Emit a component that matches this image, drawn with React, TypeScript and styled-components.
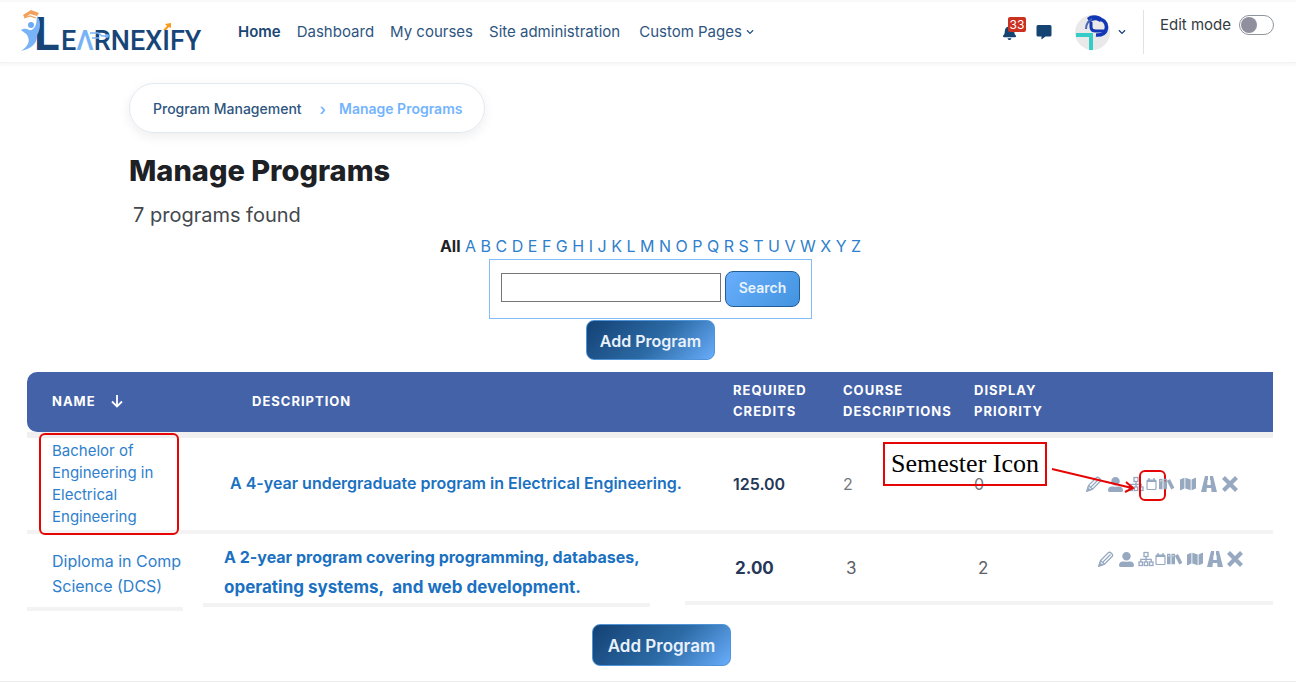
import React from "react";
import styled, { createGlobalStyle } from "styled-components";
import { FaBell, FaChevronDown, FaUserAlt, FaMap } from "react-icons/fa";
import { ImBooks } from "react-icons/im";

const GlobalStyle = createGlobalStyle`
  * { box-sizing: border-box; }
  body {
    margin: 0;
    background: #fff;
    color: #1d2125;
    font-family: Inter, "Liberation Sans", sans-serif;
    font-size: 16px;
  }
  a { text-decoration: none; color: inherit; }
  button { font-family: inherit; cursor: pointer; }
`;

const Header = styled.header`
  display: flex;
  align-items: center;
  height: 63px;
  padding: 0 22px 0 20px;
  border-top: 2px solid #f9f9f9;
  border-bottom: 1px solid #f3f3f3;
  box-shadow: 0 2px 3px rgba(0, 0, 0, 0.04);
`;

const Logo = styled.a`
  display: block;
  width: 184px;
  margin-right: 34px;
  svg { display: block; }
`;

const Nav = styled.nav`
  display: flex;
  align-items: center;
  gap: 16px;
  flex: 1;
`;

const NavLink = styled.a<{ $active?: boolean }>`
  display: flex;
  align-items: center;
  gap: 4px;
  font-size: 15px;
  line-height: 20px;
  white-space: nowrap;
  color: ${(p) => (p.$active ? "#1b4674" : "#2d5580")};
  font-weight: ${(p) => (p.$active ? 600 : 400)};
`;

const MenuLink = styled(NavLink)`
  margin-left: 3px;
`;

const Tools = styled.div`
  display: flex;
  align-items: center;
  align-self: stretch;
`;

const PlainButton = styled.button`
  position: relative;
  display: flex;
  align-items: center;
  padding: 0;
  border: 0;
  background: none;
  color: #17437a;
`;

const BellButton = styled(PlainButton)`
  margin-right: 19px;
  color: #164472;
`;

const Badge = styled.span`
  position: absolute;
  left: 6px;
  top: -8px;
  width: 18px;
  height: 15px;
  border-radius: 2px;
  background: #ca3120;
  color: #fff;
  font-size: 12px;
  line-height: 15px;
  text-align: center;
`;

const ProfileButton = styled(PlainButton)`
  gap: 8px;
  margin: 0 17px 0 23px;
`;

const EditMode = styled.label`
  display: flex;
  align-items: flex-start;
  gap: 8px;
  align-self: center;
  height: 44px;
  padding: 5px 0 0 16px;
  border-left: 1px solid #dee2e6;
  font-size: 15px;
  line-height: 20px;
  color: #343a40;
`;

const Switch = styled.input`
  appearance: none;
  width: 35px;
  height: 20px;
  margin: 0;
  padding: 1px;
  border: 1px solid #8f959e;
  border-radius: 10px;
  background: #fff;
  &::before {
    content: "";
    display: block;
    width: 16px;
    height: 16px;
    border-radius: 50%;
    background: #8f8f9d;
  }
`;

const Intro = styled.section`
  padding: 20px 129px 0;
`;

const Breadcrumb = styled.nav`
  display: inline-flex;
  align-items: center;
  height: 50px;
  padding: 2px 22px 0 23px;
  border: 1px solid #e1e8f0;
  border-radius: 25px;
  box-shadow: 0 4px 12px rgba(0, 0, 0, 0.07);
  font-size: 14px;
  line-height: 20px;
  font-weight: 500;
  color: #2d5580;
`;

const Separator = styled.span`
  margin: 0 13px 0 18px;
  color: #6cb0ff;
  font-size: 16px;
`;

const Current = styled.span`
  font-weight: 600;
  color: #74b4fd;
`;

const Title = styled.h1`
  margin: 20px 0 0;
  font-size: 29px;
  line-height: 36px;
  font-weight: 800;
`;

const Count = styled.p`
  margin: 12px 0 0;
  padding-left: 4px;
  font-size: 20px;
  line-height: 28px;
  color: #43484d;
`;

const Filters = styled.section`
  display: flex;
  flex-direction: column;
  align-items: center;
  padding: 6px 0 0 5px;
`;

const Letters = styled.nav`
  font-size: 16px;
  line-height: 22px;
  white-space: nowrap;
  color: #2f80cc;
  strong { font-weight: 700; color: #1d2125; }
`;

const SearchForm = styled.form`
  display: flex;
  align-items: flex-start;
  gap: 4px;
  margin-top: 2px;
  padding: 11px;
  height: 60px;
  border: 1px solid #84bcfa;
`;

const SearchInput = styled.input`
  width: 220px;
  height: 29px;
  margin-top: 2px;
  border: 1px solid #767676;
  background: #fff;
  font: inherit;
`;

const SearchButton = styled.button`
  width: 75px;
  height: 36px;
  padding: 0 0 3px;
  border: 1px solid #235d98;
  border-radius: 8px;
  background: linear-gradient(135deg, #69aefc, #4294e0);
  color: #e9f3ff;
  font-size: 14px;
  font-weight: 600;
`;

const AddButton = styled.button<{ $large?: boolean }>`
  height: ${(p) => (p.$large ? 42 : 40)}px;
  width: ${(p) => (p.$large ? 139 : 129)}px;
  margin-top: 1px;
  padding: 2px 0 0;
  border: 1px solid #4f94d8;
  border-radius: 8px;
  background: linear-gradient(135deg, #144174 0%, #2c6ba6 55%, #69adfb 100%);
  color: #e9f1fa;
  font-size: ${(p) => (p.$large ? 17 : 16)}px;
  font-weight: 600;
  white-space: nowrap;
`;

const TableWrap = styled.section`
  padding: 12px 23px 0 27px;
`;

const Table = styled.table`
  width: 100%;
  table-layout: fixed;
  border-collapse: separate;
  border-spacing: 0;
`;

const HeadCell = styled.th<{ $indent: number }>`
  height: 60px;
  padding: 0 0 2px ${(p) => p.$indent}px;
  background: #4462a8;
  color: #fff;
  text-align: left;
  font-size: 13px;
  line-height: 21px;
  font-weight: 700;
  letter-spacing: 1px;
  &:first-child { border-radius: 10px 0 0 10px; }
  svg { margin-left: 15px; vertical-align: -2px; }
`;

const Cell = styled.td<{ $indent: number }>`
  position: relative;
  height: 102px;
  padding: 0 0 0 ${(p) => p.$indent}px;
  border-top: 6px solid #f0f0f0;
  border-bottom: 4px solid #f3f3f3;
  color: #74777b;
  line-height: 22px;
`;

const LastCell = styled.td<{ $indent: number; $rule?: string; $drop?: number }>`
  height: 78px;
  padding: 0 0 10px ${(p) => p.$indent}px;
  background: linear-gradient(#f3f3f3, #f3f3f3) no-repeat left bottom ${(p) => p.$drop ?? 7}px /
    ${(p) => p.$rule ?? "100%"} 4px;
  color: #5d6166;
  font-size: 17px;
  line-height: 25px;
`;

const NameLink = styled.a<{ $large?: boolean }>`
  display: block;
  white-space: nowrap;
  color: #2f80cc;
  font-size: ${(p) => (p.$large ? 16 : 15)}px;
  ${(p) => p.$large && "padding-top: 12px;"}
`;

const Summary = styled.div<{ $large?: boolean }>`
  color: #1b71c1;
  font-size: 16px;
  line-height: ${(p) => (p.$large ? 30 : 24)}px;
  font-weight: ${(p) => (p.$large ? 700 : 600)};
  white-space: nowrap;
  padding: ${(p) => (p.$large ? "8px 0 0" : "0 0 3px")};
`;

const SummaryEnd = styled.span`
  display: flex;
  gap: 8px;
  font-size: 17px;
`;

const Credits = styled.strong<{ $large?: boolean }>`
  color: #253858;
  font-size: ${(p) => (p.$large ? 17 : 16)}px;
  font-weight: ${(p) => (p.$large ? 700 : 600)};
`;

const Actions = styled.div<{ $compact?: boolean }>`
  position: relative;
  display: flex;
  align-items: center;
  gap: ${(p) => (p.$compact ? 4 : 5)}px;
  ${(p) => p.$compact && "padding-bottom: 18px;"}
`;

const IconButton = styled.button<{ $narrow?: boolean }>`
  position: relative;
  display: flex;
  align-items: center;
  justify-content: center;
  flex: none;
  width: ${(p) => (p.$narrow ? 11 : 16)}px;
  height: 18px;
  margin: 0 ${(p) => (p.$narrow ? -3 : 0)}px;
  padding: 0;
  border: 0;
  background: none;
  color: #96a9c0;
`;

const NameRing = styled.span`
  position: absolute;
  left: 12px;
  top: -5px;
  width: 140px;
  height: 102px;
  border: 2px solid #e60505;
  border-radius: 6px;
  pointer-events: none;
`;

const IconRing = styled.span`
  position: absolute;
  left: -7px;
  top: -5px;
  width: 27px;
  height: 31px;
  border: 2px solid #e60505;
  border-radius: 6px;
`;

const Callout = styled.div`
  position: absolute;
  left: -203px;
  top: -33px;
  width: 164px;
  height: 44px;
  border: 2px solid #e60505;
  color: #000;
  font-family: "Liberation Serif", serif;
  font-size: 26px;
  line-height: 40px;
  text-align: center;
  white-space: nowrap;
`;

const Arrow = styled.svg`
  position: absolute;
  left: -36px;
  top: -9px;
  z-index: 1;
  pointer-events: none;
`;

const Bottom = styled.footer`
  display: flex;
  justify-content: center;
  padding: 11px 0 15px 27px;
  border-bottom: 1px solid #ececec;
`;

function LogoMark() {
  return (
    <svg width="184" height="60" viewBox="0 0 184 60" role="img" aria-label="Learnexify">
      <path d="M3 13 L11 8 L19 11 L17 14 L10 12 L5 16 Z" fill="#f3a05a" />
      <path d="M4 16 L10 14 L16 16" fill="none" stroke="#f3a05a" strokeWidth="1.200" />
      <g fontFamily="Roboto, sans-serif" fill="#174578">
        <text x="14" y="48" fontSize="47" fontWeight="700">L</text>
        <text x="41" y="48" fontSize="27" fontWeight="500">
          E<tspan fill="#78b3f7">Λ</tspan>RNEXIFY
        </text>
      </g>
      <path
        d="M1 28 C4 26 7 27 9 28 C13 29 17 25 17 14 C21 18 21 27 17 33 C18 41 11 47 1 49 C8 44 10 40 8 35 C7 31 4 31 1 28 Z"
        fill="#78b3f7"
      />
      <circle cx="11" cy="23" r="3" fill="#6cabf3" />
      <path d="M70 31 H78 L82 34 H86 M72 36 H79" fill="none" stroke="#78b3f7" strokeWidth="1.500" />
      <circle cx="87" cy="34" r="2" fill="#78b3f7" />
      <path d="M143 28 L147 24 L145 22 L151 21 L151 26 L149 25 L146 28 Z" fill="#f89b1c" />
    </svg>
  );
}

function Avatar() {
  return (
    <svg width="35" height="35" viewBox="0 0 35 35" aria-hidden="true">
      <circle cx="17.500" cy="17.500" r="17.500" fill="#e9e9e9" />
      <path d="M12 3 C17 -1 23 0 27 3 L25 7 C21 4 17 5 15 8 Z" fill="#1237b4" />
      <path d="M11 14 C11 9 13 6 17 4" fill="none" stroke="#4c64b4" strokeWidth="2" />
      <path d="M24 4 C30 5 31.500 9 31.500 12 C31.500 18 27 20.500 21 20" fill="none" stroke="#1237b4" strokeWidth="3.600" />
      <path d="M16 7 V12 C16 15 18 16 21 16 H30" fill="none" stroke="#1237b4" strokeWidth="3" />
      <path d="M1 20 H16 V35" fill="none" stroke="#35cbc7" strokeWidth="4" />
    </svg>
  );
}

function PencilIcon() {
  return (
    <svg width="16" height="16" viewBox="0 0 16 16" fill="none" stroke="currentColor" strokeWidth="1.300" aria-hidden="true">
      <path d="M1 15 L2.500 9.500 L10.500 1.500 C12 .5 15.500 3.500 14.300 5.300 L6.500 13.200 Z M2.500 9.500 L6.500 13.200 M5 11 L12.500 3.500" />
      <path d="M1 15 L1.800 12 L4 14 Z" fill="currentColor" />
    </svg>
  );
}

function SitemapIcon() {
  return (
    <svg width="16" height="16" viewBox="0 0 16 16" fill="none" stroke="currentColor" strokeWidth="1.300" aria-hidden="true">
      <rect x="6" y="1.500" width="4" height="4" />
      <rect x="1" y="11" width="3.500" height="3.500" />
      <rect x="6.250" y="11" width="3.500" height="3.500" />
      <rect x="11.500" y="11" width="3.500" height="3.500" />
      <path d="M8 5.500 V11 M2.800 11 V8.300 H13.200 V11" />
    </svg>
  );
}

function RoadIcon() {
  return (
    <svg width="16" height="16" viewBox="0 0 16 16" fill="currentColor" aria-hidden="true">
      <path d="M4 0 H7 V4 H6.500 L6.200 9 H9.800 L9.500 4 H9 V0 H12 L16 16 H10.500 L10.200 12 H5.800 L5.500 16 H0 Z" />
    </svg>
  );
}

function CrossIcon() {
  return (
    <svg width="16" height="16" viewBox="0 0 16 16" stroke="currentColor" strokeWidth="4.200" aria-hidden="true">
      <path d="M1.500 1.500 L14.500 14.500 M14.500 1.500 L1.500 14.500" />
    </svg>
  );
}

function CalendarIcon() {
  return (
    <svg width="11" height="14" viewBox="0 0 11 14" fill="none" stroke="currentColor" aria-hidden="true">
      <rect x="1" y="3" width="9" height="9.500" rx="1" strokeWidth="1.200" />
      <path d="M1 4 H10" strokeWidth="2" />
      <path d="M3 1 V4 M8 1 V4" strokeWidth="1.400" />
    </svg>
  );
}

function RowActions({ compact, annotated }: { compact?: boolean; annotated?: boolean }) {
  return (
    <Actions $compact={compact}>
      <IconButton aria-label="Edit"><PencilIcon /></IconButton>
      <IconButton aria-label="Members"><FaUserAlt size={15} /></IconButton>
      <IconButton aria-label="Structure"><SitemapIcon /></IconButton>
      <IconButton aria-label="Semester" $narrow>
        <CalendarIcon />
        {annotated && <IconRing />}
      </IconButton>
      <IconButton aria-label="Courses"><ImBooks size={16} /></IconButton>
      <IconButton aria-label="Map"><FaMap size={16} /></IconButton>
      <IconButton aria-label="Path"><RoadIcon /></IconButton>
      <IconButton aria-label="Delete"><CrossIcon /></IconButton>
      {annotated && (
        <>
          <Callout>Semester Icon</Callout>
          <Arrow width="90" height="32" viewBox="0 0 90 32" fill="none" stroke="#e60505" strokeWidth="2">
            <path d="M2 3 L82 22 M76 16 L83 22 L75 26" />
          </Arrow>
        </>
      )}
    </Actions>
  );
}

const alphabet = "ABCDEFGHIJKLMNOPQRSTUVWXYZ".split("");

export default function App() {
  return (
    <>
      <GlobalStyle />
      <Header>
        <Logo href="#"><LogoMark /></Logo>
        <Nav aria-label="Main">
          <NavLink href="#" $active>Home</NavLink>
          <NavLink href="#">Dashboard</NavLink>
          <NavLink href="#">My courses</NavLink>
          <NavLink href="#">Site administration</NavLink>
          <MenuLink href="#">Custom Pages <FaChevronDown size={8} /></MenuLink>
        </Nav>
        <Tools>
          <BellButton aria-label="Notifications">
            <FaBell size={15} />
            <Badge>33</Badge>
          </BellButton>
          <PlainButton aria-label="Messages">
            <svg width="16" height="16" viewBox="0 0 16 16" fill="#164472" aria-hidden="true">
              <path d="M2 1 H14 Q15.500 1 15.500 2.500 V11 Q15.500 12.500 14 12.500 H9.500 L5.500 15.500 V12.500 H2 Q.5 12.500 .5 11 V2.500 Q.5 1 2 1 Z" />
            </svg>
          </PlainButton>
          <ProfileButton aria-label="Profile">
            <Avatar />
            <FaChevronDown size={8} />
          </ProfileButton>
          <EditMode>
            Edit mode
            <Switch type="checkbox" role="switch" />
          </EditMode>
        </Tools>
      </Header>

      <main>
        <Intro>
          <Breadcrumb aria-label="Breadcrumb">
            <a href="#">Program Management</a>
            <Separator>›</Separator>
            <Current>Manage Programs</Current>
          </Breadcrumb>
          <Title>Manage Programs</Title>
          <Count>7 programs found</Count>
        </Intro>

        <Filters>
          <Letters aria-label="Filter by letter">
            <strong>All</strong>
            {alphabet.map((l) => (
              <React.Fragment key={l}>
                {" "}
                <a href="#">{l}</a>
              </React.Fragment>
            ))}
          </Letters>
          <SearchForm onSubmit={(e) => e.preventDefault()}>
            <SearchInput type="text" aria-label="Search programs" />
            <SearchButton type="submit">Search</SearchButton>
          </SearchForm>
          <AddButton type="button">Add Program</AddButton>
        </Filters>

        <TableWrap>
          <Table>
            <colgroup>
              <col style={{ width: 176 }} />
              <col />
              <col style={{ width: 133 }} />
              <col style={{ width: 131 }} />
              <col style={{ width: 112 }} />
              <col style={{ width: 212 }} />
            </colgroup>
            <thead>
              <tr>
                <HeadCell $indent={25}>
                  NAME
                  <svg width="12" height="14" viewBox="0 0 12 14" fill="none" stroke="#fff" strokeWidth="1.800" aria-hidden="true">
                    <path d="M6 1 V12 M1 7.500 L6 12.500 L11 7.500" />
                  </svg>
                </HeadCell>
                <HeadCell $indent={49}>DESCRIPTION</HeadCell>
                <HeadCell $indent={48}>REQUIRED<br />CREDITS</HeadCell>
                <HeadCell $indent={25}>COURSE<br />DESCRIPTIONS</HeadCell>
                <HeadCell $indent={25}>DISPLAY<br />PRIORITY</HeadCell>
                <HeadCell $indent={25} aria-label="Actions" />
              </tr>
            </thead>
            <tbody>
              <tr>
                <Cell $indent={25}>
                  <NameLink href="#">Bachelor of<br />Engineering in<br />Electrical<br />Engineering</NameLink>
                  <NameRing />
                </Cell>
                <Cell $indent={27}>
                  <Summary>A 4-year undergraduate program in Electrical Engineering.</Summary>
                </Cell>
                <Cell $indent={48}><Credits>125.00</Credits></Cell>
                <Cell $indent={25}>2</Cell>
                <Cell $indent={25}>0</Cell>
                <Cell $indent={25}><RowActions annotated /></Cell>
              </tr>
              <tr>
                <LastCell $indent={25} $rule="156px" $drop={1}>
                  <NameLink href="#" $large>Diploma in Comp<br />Science (DCS)</NameLink>
                </LastCell>
                <LastCell $indent={21} $rule="calc(100% - 35px)" $drop={5}>
                  <Summary $large>
                    A 2-year program covering programming, databases,
                    <SummaryEnd>
                      <span>operating systems,</span>
                      <span>and web development.</span>
                    </SummaryEnd>
                  </Summary>
                </LastCell>
                <LastCell $indent={50}><Credits $large>2.00</Credits></LastCell>
                <LastCell $indent={28}>3</LastCell>
                <LastCell $indent={29}>2</LastCell>
                <LastCell $indent={37}><RowActions compact /></LastCell>
              </tr>
            </tbody>
          </Table>
        </TableWrap>
      </main>

      <Bottom>
        <AddButton type="button" $large>Add Program</AddButton>
      </Bottom>
    </>
  );
}
